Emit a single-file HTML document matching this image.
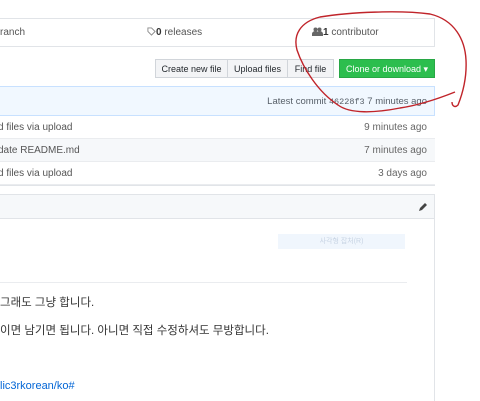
<!DOCTYPE html><html style="overflow:hidden;height:401px"><head><meta charset="utf-8"><style>
body{margin:0;width:480px;height:401px;overflow:hidden;background:#fff;font-family:"Liberation Sans","Noto Sans CJK KR",sans-serif;color:#24292e;position:relative}
.a{position:absolute}
.btn{position:absolute;top:59px;height:19px;border:1px solid #d1d5da;background:#f3f4f6;font-size:9px;line-height:19px;text-align:center;color:#24292e;box-sizing:border-box}
.row{position:absolute;left:-2px;width:437px;height:23px;border-bottom:1px solid #eaecef;box-sizing:border-box;font-size:10px;line-height:23px;color:#555}
.row span{position:absolute;right:8px;color:#666}
</style></head><body>
<div class="a" style="left:-2px;top:18px;width:437px;height:29px;border:1px solid #e1e4e8;box-sizing:border-box"></div>
<div class="a" style="left:0;top:27px;font-size:10px;color:#555">ranch</div>
<div class="a" style="left:147px;top:27px;font-size:10px;color:#555">
<svg width="9" height="9" viewBox="0 0 10 10" style="vertical-align:-1px"><path d="M1 1h4l4 4-4 4-4-4z" fill="none" stroke="#888"/></svg><b style="color:#333">0</b> releases</div>
<div class="a" style="left:312px;top:27px;font-size:10px;color:#555"><svg width="11" height="9" viewBox="0 0 11 9" style="vertical-align:-1px"><circle cx="3.5" cy="2.5" r="2" fill="#666"/><circle cx="7.5" cy="2.5" r="2" fill="#666"/><path d="M0 9v-2c0-2 2-3 3.5-3s3.5 1 3.5 3v2zM5 9v-2c0-2 1-3 2.5-3s3.5 1 3.5 3v2z" fill="#666"/></svg><b style="color:#333">1</b> contributor</div>
<div class="btn" style="left:155px;width:73px">Create new file</div>
<div class="btn" style="left:227px;width:61px">Upload files</div>
<div class="btn" style="left:287px;width:47px">Find file</div>
<div class="btn" style="left:339px;width:96px;background:#2cbe4e;border-color:#28a745;color:#fff">Clone or download ▾</div>
<div class="a" style="left:-2px;top:86px;width:437px;height:30px;background:#f1f8ff;border:1px solid #c8e1ff;box-sizing:border-box;font-size:9.5px;line-height:30px;color:#586069;text-align:right;padding-right:7px">Latest commit <span style="font-family:'Liberation Mono',monospace;font-size:8.5px">46228f3</span> 7 minutes ago</div>
<div class="row" style="top:116px">d files via upload<span>9 minutes ago</span></div>
<div class="row" style="top:139px;background:#f6f8fa">date README.md<span>7 minutes ago</span></div>
<div class="row" style="top:162px">d files via upload<span>3 days ago</span></div>
<div class="a" style="left:-2px;top:185px;width:437px;height:1px;background:#e1e4e8"></div>
<div class="a" style="left:-2px;top:194px;width:437px;height:220px;border:1px solid #e1e4e8;border-bottom:none;box-sizing:border-box"></div>
<div class="a" style="left:-1px;top:195px;width:435px;height:23px;background:#f6f8fa;border-bottom:1px solid #e1e4e8"></div>
<svg class="a" style="left:418px;top:202px" width="10" height="10" viewBox="0 0 10 10"><path d="M1 9l1-3 5-5 2 2-5 5z" fill="#444"/></svg>
<div class="a" style="left:278px;top:234px;width:127px;height:15px;background:#f0f6fd;font-size:7px;color:#c8d4e4;text-align:center;line-height:15px">사각형 잡처(R)</div>
<div class="a" style="left:0;top:282px;width:407px;height:1px;background:#eaecef"></div>
<div class="a" style="left:0;top:294px;font-size:11.5px;color:#333">그래도 그냥 합니다.</div>
<div class="a" style="left:0;top:322px;font-size:11.5px;color:#333">이면 남기면 됩니다. 아니면 직접 수정하셔도 무방합니다.</div>
<div class="a" style="left:0;top:380px;font-size:11px;color:#0366d6">lic3rkorean/ko#</div>
<svg class="a" style="left:0;top:0" width="480" height="401"><path d="M455 92 C440 98 420 105 400 108 C375 113 350 114 338 105 C318 92 303 68 297 50 C293 35 300 22 320 17 C350 12 400 10 430 14 C455 20 465 40 466 60 C467 80 462 95 458 105 C455 108 452 106 452 102" fill="none" stroke="#c0242a" stroke-width="1.4"/></svg>
</body></html>
